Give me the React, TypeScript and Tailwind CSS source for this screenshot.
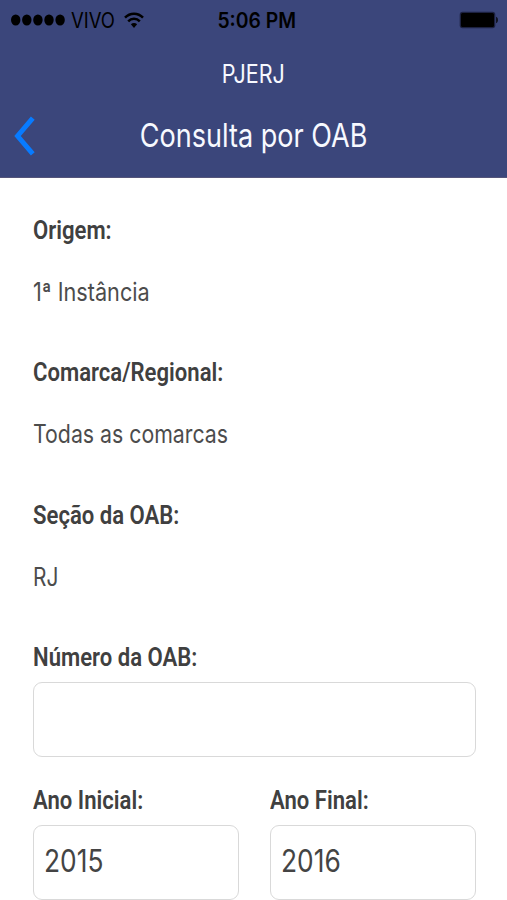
import { useState } from 'react';

type FieldProps = {
  label: string;
  value: string;
  valueScale: string;
};

const LABEL = "inline-block origin-left scale-x-[.85] whitespace-nowrap font-['Roboto',sans-serif] text-[26px] font-semibold leading-[43px] text-[#404040]";
const VALUE = 'inline-block origin-left whitespace-nowrap text-[25.5px] leading-[80px] text-[#4c4c4c]';
const INPUT = 'flex h-[75px] items-center rounded-[9px] border border-[#d9d9d9] bg-white pb-[2px] pl-[10px]';
const YEAR = 'origin-left scale-x-[.85] text-[31px] text-[#444]';

function Field({ label, value, valueScale }: FieldProps) {
  return (
    <div className="h-[142.4px]">
      <div className="h-[43px]">
        <span className={LABEL}>{label}</span>
      </div>
      <div className="h-[80px]">
        <span className={`${VALUE} ${valueScale}`}>{value}</span>
      </div>
    </div>
  );
}

function StatusBar() {
  return (
    <div className="grid h-10 grid-cols-3 text-[21px] leading-[41px] text-black">
      <div className="flex h-10 items-center pl-[11px]">
        <svg width="54" height="12" viewBox="0 0 54 12">
          {[4.7, 15.8, 26.9, 38, 49.1].map((cx) => (
            <ellipse key={cx} cx={cx} cy="6" rx="4.7" ry="5.5" />
          ))}
        </svg>
        <span className="ml-[6px] w-[44px] origin-left scale-x-[.88] whitespace-nowrap pt-px">VIVO</span>
        <svg className="ml-[9px]" width="20" height="17" viewBox="0 0 20 17" fill="none" stroke="#000" strokeWidth="2.5">
          <path d="M1 5.7C6 .5 14 .5 19 5.7" />
          <path d="M4.2 9.3C7.4 6 12.6 6 15.8 9.3" />
          <path d="M6.9 12.3C8.6 10.6 11.4 10.6 13.1 12.3L10 16Z" fill="#000" stroke="none" />
        </svg>
      </div>
      <div className="flex h-10 justify-center pl-[7px]">
        <span className="scale-x-[.92] whitespace-nowrap font-semibold">5:06 PM</span>
      </div>
      <div className="flex h-10 items-center justify-end pr-[8px]">
        <svg width="40" height="18" viewBox="0 0 40 18">
          <rect x=".7" y=".7" width="35.6" height="16.6" rx="3" fill="#1c2140" />
          <rect x="2" y="2" width="33" height="14" rx="1.5" />
          <path d="M37.3 5.8C39.2 6.3 39.2 11.7 37.3 12.2Z" />
        </svg>
      </div>
    </div>
  );
}

export default function App() {
  const [anoInicial] = useState('2015');
  const [anoFinal] = useState('2016');

  return (
    <div className="h-[900px] w-[507px] overflow-hidden bg-white font-['Inter',sans-serif]">
      <header className="h-[177.5px] border-b border-[#55557a] bg-[#3b467b] text-[#f7f9ff]">
        <StatusBar />
        <div className="flex h-[68px] items-center justify-center">
          <span className="scale-x-[.845] text-[25.5px]">PJERJ</span>
        </div>
        <div className="flex h-[55px] items-center">
          <button type="button" aria-label="Voltar" className="ml-[14px] w-6">
            <svg width="22" height="40" viewBox="0 0 22 40" fill="none" stroke="#087bff" strokeWidth="5">
              <path d="M18.8 2.2L3.6 20L18.8 37.8" />
            </svg>
          </button>
          <h1 className="flex flex-1 justify-center pr-[37px] text-[32px]">
            <span className="scale-x-[.845] whitespace-nowrap">Consulta por OAB</span>
          </h1>
        </div>
      </header>

      <main className="pl-[32.5px] pr-[31px] pt-[31.4px]">
        <Field label="Origem:" value="1ª Instância" valueScale="scale-x-[.85]" />
        <Field label="Comarca/Regional:" value="Todas as comarcas" valueScale="scale-x-[.835]" />
        <Field label="Seção da OAB:" value="RJ" valueScale="scale-x-[.82]" />

        <div className="h-[142.8px]">
          <div className="h-[46px]">
            <span className={LABEL}>Número da OAB:</span>
          </div>
          <div className={INPUT} />
        </div>

        <div className="grid grid-cols-2 gap-[31.5px]">
          <div>
            <div className="h-[46px]">
              <span className={LABEL}>Ano Inicial:</span>
            </div>
            <div className={INPUT}>
              <span className={YEAR}>{anoInicial}</span>
            </div>
          </div>
          <div>
            <div className="h-[46px]">
              <span className={LABEL}>Ano Final:</span>
            </div>
            <div className={INPUT}>
              <span className={YEAR}>{anoFinal}</span>
            </div>
          </div>
        </div>
      </main>
    </div>
  );
}
